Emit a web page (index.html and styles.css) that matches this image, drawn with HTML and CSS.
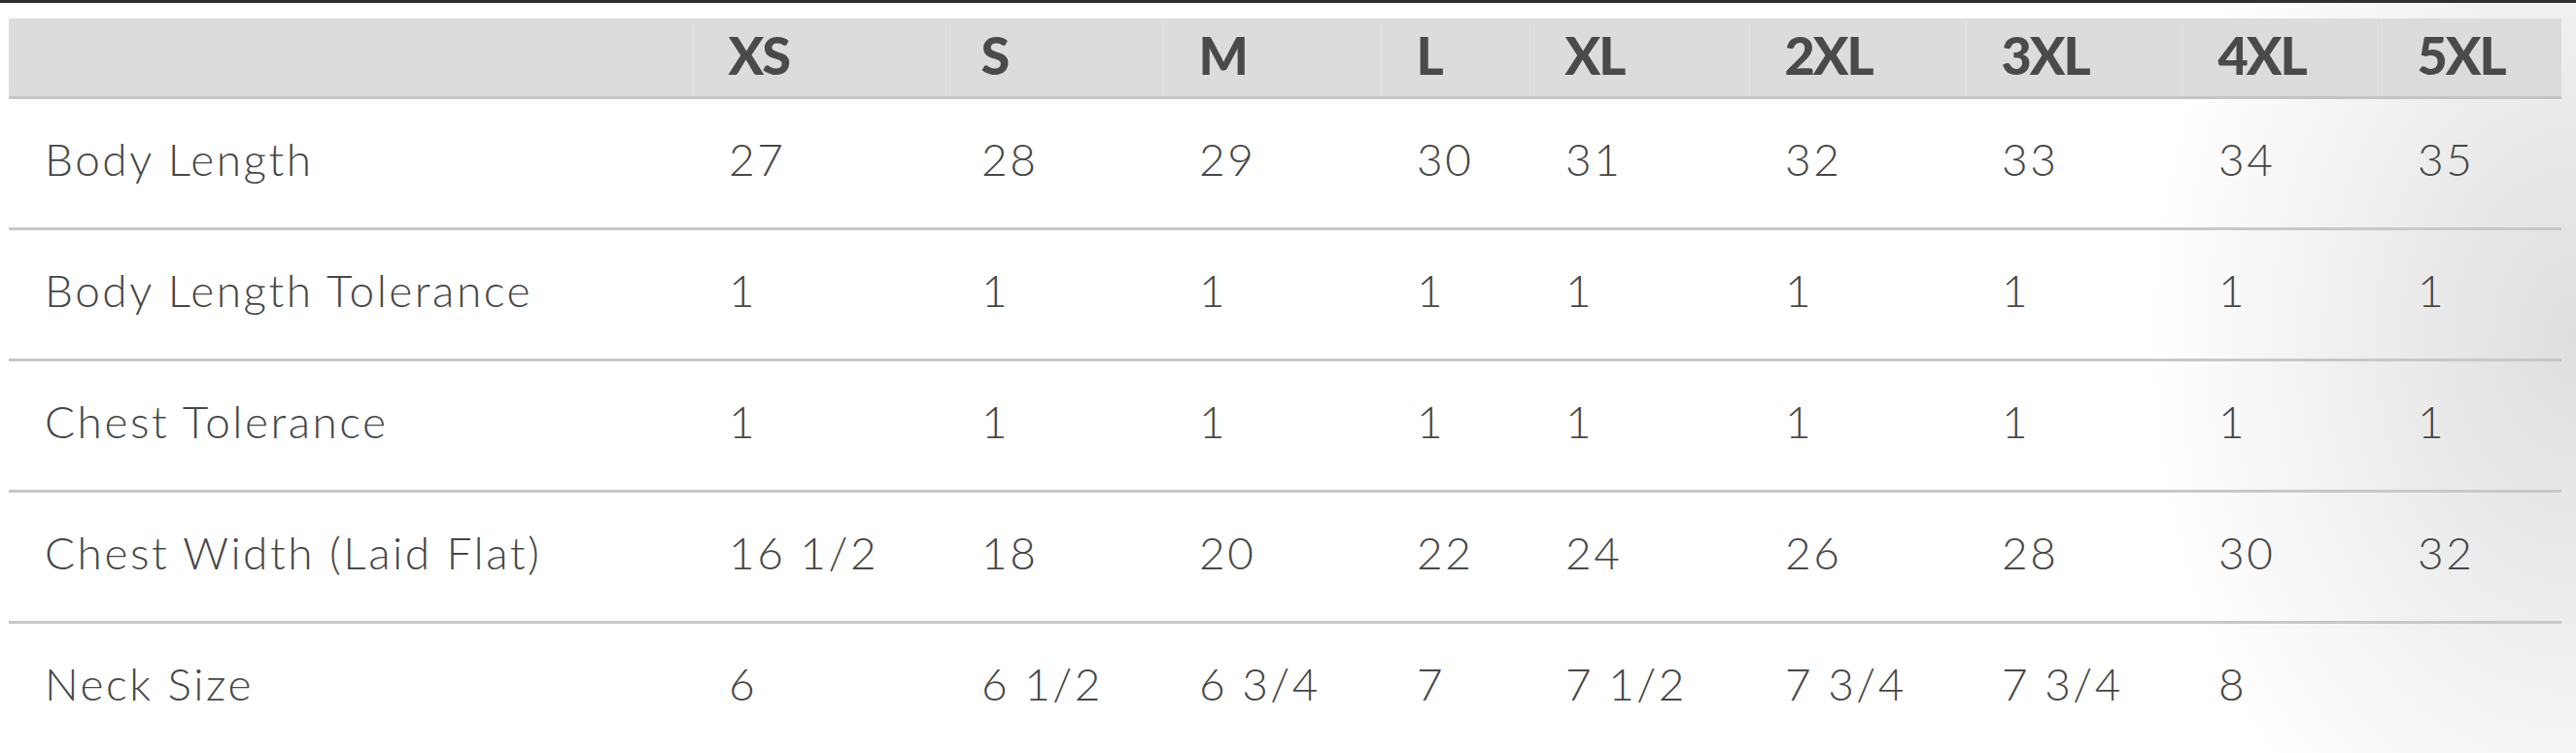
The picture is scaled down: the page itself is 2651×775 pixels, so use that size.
FILE: index.html
```html
<!DOCTYPE html>
<html lang="en">
<head>
  <meta charset="UTF-8">
  <meta name="viewport" content="width=device-width, initial-scale=1.0">
  <title>Size Chart</title>
  <link rel="stylesheet" href="styles.css">
</head>
<body>
  <div class="top-bar"></div>
  <div class="chart-wrap">
    <!-- Tabela de medidas -->
    <table class="size-chart">
      <colgroup>
        <col class="col-label">
        <col class="col-xs">
        <col class="col-s">
        <col class="col-m">
        <col class="col-l">
        <col class="col-xl">
        <col class="col-2xl">
        <col class="col-3xl">
        <col class="col-4xl">
        <col class="col-5xl">
      </colgroup>
      <thead>
        <tr>
          <th></th>
          <th>XS</th>
          <th>S</th>
          <th>M</th>
          <th>L</th>
          <th>XL</th>
          <th>2XL</th>
          <th>3XL</th>
          <th>4XL</th>
          <th>5XL</th>
        </tr>
      </thead>
      <tbody>
        <tr>
          <td>Body Length</td>
          <td>27</td><td>28</td><td>29</td><td>30</td><td>31</td><td>32</td><td>33</td><td>34</td><td>35</td>
        </tr>
        <tr>
          <td>Body Length Tolerance</td>
          <td>1</td><td>1</td><td>1</td><td>1</td><td>1</td><td>1</td><td>1</td><td>1</td><td>1</td>
        </tr>
        <tr>
          <td>Chest Tolerance</td>
          <td>1</td><td>1</td><td>1</td><td>1</td><td>1</td><td>1</td><td>1</td><td>1</td><td>1</td>
        </tr>
        <tr>
          <td>Chest Width (Laid Flat)</td>
          <td>16 1/2</td><td>18</td><td>20</td><td>22</td><td>24</td><td>26</td><td>28</td><td>30</td><td>32</td>
        </tr>
        <tr>
          <td>Neck Size</td>
          <td>6</td><td>6 1/2</td><td>6 3/4</td><td>7</td><td>7 1/2</td><td>7 3/4</td><td>7 3/4</td><td>8</td><td></td>
        </tr>
      </tbody>
    </table>
  </div>
</body>
</html>
```

FILE: styles.css
```css
body {
  font-family: Lato, "Open Sans", Arial, sans-serif;
  margin: 0;
  padding: 0;
  height: 100vh;
  overflow: hidden;
  background-color: #fff;
  background-image: radial-gradient(ellipse 440px 620px at 100% 45%, #dedede 0%, rgba(255, 255, 255, 0) 100%);
}

.top-bar {
  height: 3px;
  background-color: #2f2f2f;
}

.chart-wrap {
  padding: 16px 15px 0 9px;
}

.size-chart {
  width: 2627px;
  border-collapse: collapse;
  table-layout: fixed;
  color: #474747;
}

.col-label { width: 704px; }
.col-xs { width: 260px; }
.col-s { width: 224px; }
.col-m { width: 224px; }
.col-l { width: 153px; }
.col-xl { width: 226px; }
.col-2xl { width: 223px; }
.col-3xl { width: 223px; }
.col-4xl { width: 205px; }
.col-5xl { width: 185px; }

.size-chart th {
  height: 74px;
  padding: 0 0 6px 36px;
  text-align: left;
  font-size: 54px;
  font-weight: 900;
  color: #4a4a4a;
  background-color: #dcdcdc;
  border-left: 1px solid #e3e3e3;
  border-bottom: 3px solid #c4c4c4;
  letter-spacing: -2px;
}

.size-chart th:first-child {
  border-left: none;
}

.size-chart td {
  height: 122px;
  padding: 0 0 10px 37px;
  font-size: 46px;
  font-weight: 300;
  letter-spacing: 2.5px;
  white-space: nowrap;
  border-bottom: 3px solid #c8c8c8;
}

.size-chart tbody tr:last-child td {
  border-bottom: none;
}
```
